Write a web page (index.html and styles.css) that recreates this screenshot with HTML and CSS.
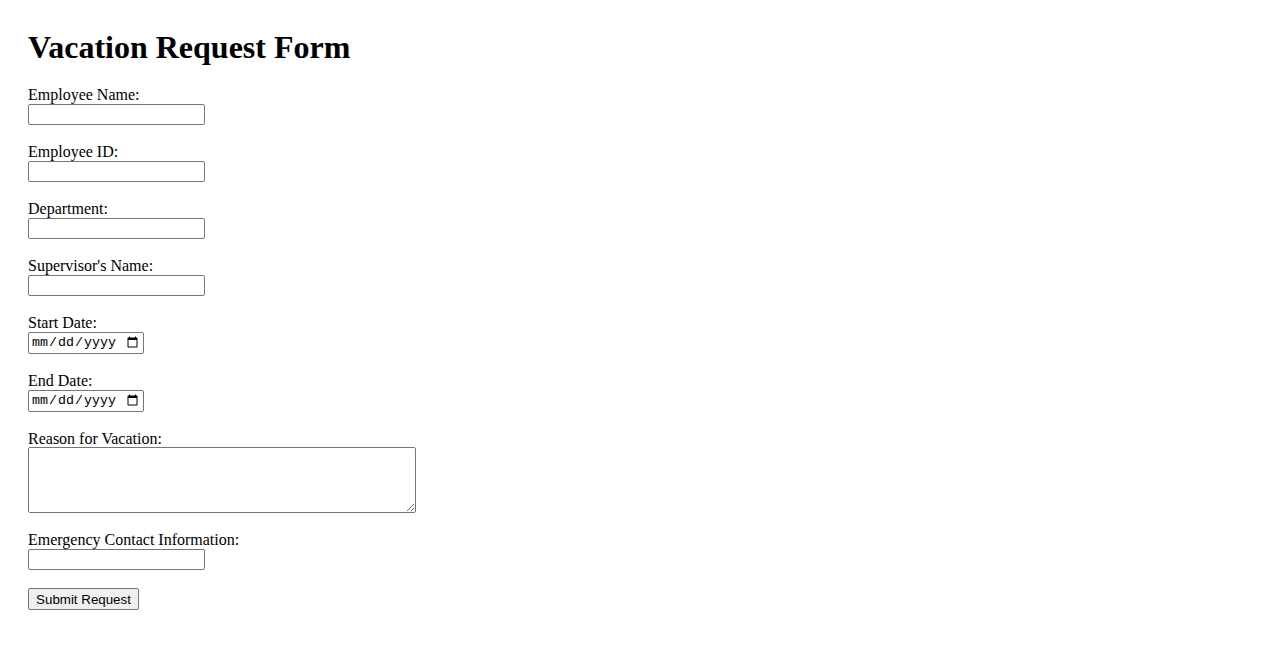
FILE: index.html
```html
<!DOCTYPE html>
<html lang="en">
<head>
<meta charset="utf-8">
<title>Vacation Request Form</title>
<link rel="stylesheet" href="styles.css">
</head>
<body>
<div class="page">
  <h1 class="title">Vacation Request Form</h1>
  <form class="form">
    <div class="field">
      <label class="label" for="name">Employee Name:</label>
      <input class="text-input" type="text" id="name">
    </div>
    <div class="field">
      <label class="label" for="eid">Employee ID:</label>
      <input class="text-input" type="text" id="eid">
    </div>
    <div class="field">
      <label class="label" for="dept">Department:</label>
      <input class="text-input" type="text" id="dept">
    </div>
    <div class="field">
      <label class="label" for="sup">Supervisor's Name:</label>
      <input class="text-input" type="text" id="sup">
    </div>
    <div class="field">
      <label class="label" for="start">Start Date:</label>
      <input class="date-input" type="date" id="start">
    </div>
    <div class="field">
      <label class="label" for="end">End Date:</label>
      <input class="date-input" type="date" id="end">
    </div>
    <div class="field">
      <label class="label" for="reason">Reason for Vacation:</label>
      <textarea class="area" id="reason"></textarea>
    </div>
    <div class="field">
      <label class="label" for="emerg">Emergency Contact Information:</label>
      <input class="text-input" type="text" id="emerg">
    </div>
    <div class="field">
      <button class="submit" type="submit">Submit Request</button>
    </div>
  </form>
</div>
</body>
</html>
```
FILE: styles.css
```css
html, body {
  margin: 0;
  padding: 0;
  background: #ffffff;
}
body {
  font-family: "Liberation Serif", "Times New Roman", serif;
  font-size: 16px;
  color: #000000;
}
.page {
  padding: 29px 28px 20px 28px;
}
.title {
  font-size: 32px;
  font-weight: bold;
  line-height: 37px;
  margin: 0 0 20px 0;
}
.form {
  display: flex;
  flex-direction: column;
  align-items: flex-start;
}
.field {
  display: flex;
  flex-direction: column;
  align-items: flex-start;
  margin-bottom: 18px;
}
.label {
  display: block;
  line-height: 18px;
}
.text-input,
.date-input,
.area {
  box-sizing: border-box;
  border: 1px solid #767676;
  border-radius: 2px;
  background: #ffffff;
  margin: 0;
}
.text-input {
  width: 177px;
  height: 21px;
  padding: 1px 2px;
  font-family: "Liberation Sans", Arial, sans-serif;
  font-size: 13.33px;
}
.date-input {
  width: 116px;
  height: 22px;
  padding: 1px 2px;
  font-family: "Liberation Mono", "Courier New", monospace;
  font-size: 13.33px;
  color: #000000;
}
.area {
  width: 388px;
  height: 66px;
  margin-top: -1px;
  padding: 2px;
  font-family: "Liberation Mono", monospace;
  font-size: 13.33px;
  resize: both;
}
.submit {
  box-sizing: border-box;
  height: 22px;
  width: 111px;
  padding: 1px 6px;
  margin: 0;
  font-family: "Liberation Sans", Arial, sans-serif;
  font-size: 13.33px;
  color: #000000;
  background: #efefef;
  border: 1px solid #767676;
  border-radius: 2px;
}
```
